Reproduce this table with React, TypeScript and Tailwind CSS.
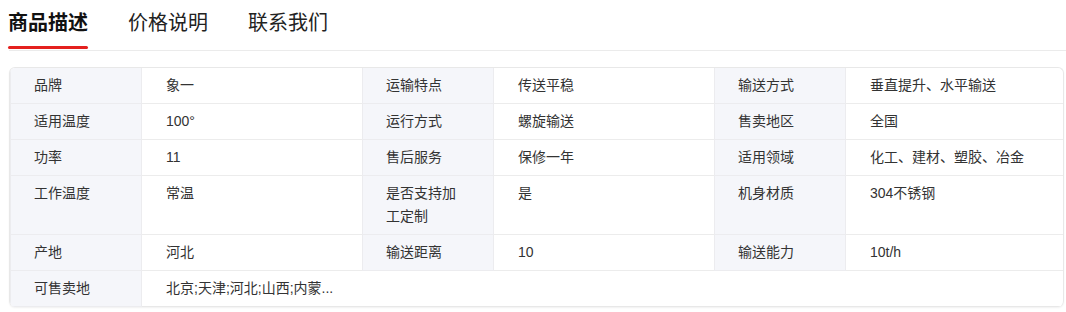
import React from "react";

const rows: [string, string, string, string, string, string][] = [
  ["品牌", "象一", "运输特点", "传送平稳", "输送方式", "垂直提升、水平输送"],
  ["适用温度", "100°", "运行方式", "螺旋输送", "售卖地区", "全国"],
  ["功率", "11", "售后服务", "保修一年", "适用领域", "化工、建材、塑胶、冶金"],
  ["工作温度", "常温", "是否支持加工定制", "是", "机身材质", "304不锈钢"],
  ["产地", "河北", "输送距离", "10", "输送能力", "10t/h"],
];

const font = { fontFamily: '"Liberation Sans", "Noto Sans CJK SC", sans-serif' };

function Label({ text }: { text: string }) {
  return (
    <div className="bg-[#f5f6fa] border-b border-x border-[#ececef] pl-[23px] pr-6 py-[6px] leading-[23px] text-[14px] text-[#333]">
      {text}
    </div>
  );
}

function Value({ text }: { text: string }) {
  return (
    <div className="border-b border-[#ececec] px-6 py-[6px] leading-[23px] text-[14px] text-[#333]">
      {text}
    </div>
  );
}

export default function App() {
  return (
    <div className="w-[1066px] h-[312px] bg-white pl-[9px] overflow-hidden" style={font}>
      <div className="flex h-[51px] border-b border-[#ebebeb] gap-[40px]">
        <div className="relative h-[50px] -ml-px">
          <div className="pt-[9px] leading-[28px] text-[20px] font-bold text-[#111]">商品描述</div>
          <div className="absolute left-0 right-0 bottom-[1px] h-[3px] bg-[#e4201e] rounded-sm" />
        </div>
        <div className="pt-[9px] leading-[28px] text-[20px] text-[#222]">价格说明</div>
        <div className="pt-[9px] leading-[28px] text-[20px] text-[#222]">联系我们</div>
      </div>
      <div className="mt-[16px] w-[1055px] border border-[#e8e8e8] border-b-0 rounded-[6px] overflow-hidden shadow-[0_1px_2px_rgba(0,0,0,0.06)]">
        <div className="grid grid-cols-[132px_220px_132px_220px_132px_1fr]">
          {rows.map((r, i) => (
            <React.Fragment key={i}>
              <Label text={r[0]} />
              <Value text={r[1]} />
              <Label text={r[2]} />
              <Value text={r[3]} />
              <Label text={r[4]} />
              <Value text={r[5]} />
            </React.Fragment>
          ))}
          <Label text="可售卖地" />
          <div className="col-span-5 border-b border-[#e8e8e8] px-6 py-[6px] leading-[23px] text-[14px] text-[#333]">
            北京;天津;河北;山西;内蒙...
          </div>
        </div>
      </div>
    </div>
  );
}
